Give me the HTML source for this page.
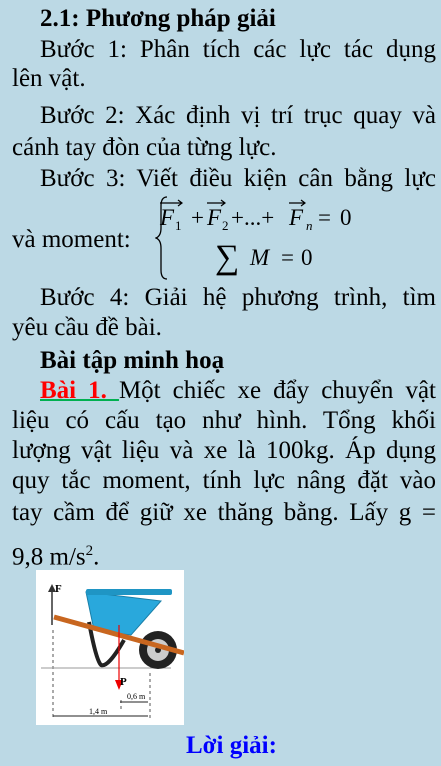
<!DOCTYPE html>
<html><head><meta charset="utf-8"><style>
html,body{margin:0;padding:0}
body{width:441px;height:766px;background:#bcd9e5;position:relative;overflow:hidden;font-family:"Liberation Serif",serif;font-size:25px;color:#000}
.l{position:absolute;left:12px;width:424px;line-height:30px;white-space:nowrap;text-align:justify;text-align-last:justify}
.i{left:40px;width:396px}
.n{text-align-last:left}
b{font-weight:bold}
</style></head><body>
<div class="l i n" style="top:4px"><b>2.1: Phương pháp giải</b></div>
<div class="l i" style="top:35px">Bước 1: Phân tích các lực tác dụng</div>
<div class="l n" style="top:64px">lên vật.</div>
<div class="l i" style="top:101px">Bước 2: Xác định vị trí trục quay và</div>
<div class="l n" style="top:133px">cánh tay đòn của từng lực.</div>
<div class="l i" style="top:164px">Bước 3: Viết điều kiện cân bằng lực</div>
<div class="l n" style="top:225px">và moment:</div>
<svg style="position:absolute;left:155px;top:194px" width="220" height="90">
<path d="M12 3 Q6 3 6 12 L6 34 Q6 42 1 44 Q6 46 6 54 L6 76 Q6 85 12 85" fill="none" stroke="#000" stroke-width="1.3"/>
<g font-family="Liberation Serif" font-size="23" font-style="italic">
<text x="5" y="31">F</text><text x="52" y="31">F</text><text x="134" y="31">F</text><text x="95" y="71">M</text></g>
<g font-family="Liberation Serif" font-size="13"><text x="20" y="36">1</text><text x="67" y="36">2</text><text x="151" y="36" font-style="italic">n</text></g>
<g stroke="#000" stroke-width="1.2" fill="none"><path d="M5 9 H27 M23 6 L27 9 L23 12"/><path d="M52 9 H70 M66 6 L70 9 L66 12"/><path d="M134 9 H150 M146 6 L150 9 L146 12"/></g>
<g font-family="Liberation Serif" font-size="23"><text x="36" y="31">+</text><text x="76" y="31">+...+</text><text x="163" y="31">=</text><text x="185" y="31">0</text><text x="126" y="71">=</text><text x="146" y="71">0</text><text x="60" y="74" font-size="34">∑</text></g>
</svg>
<div class="l i" style="top:283px">Bước 4: Giải hệ phương trình, tìm</div>
<div class="l n" style="top:313px">yêu cầu đề bài.</div>
<div class="l i n" style="top:346px"><b>Bài tập minh hoạ</b></div>
<div class="l i" style="top:376px"><b style="color:#f00;text-decoration:underline;text-decoration-color:#00b050;text-decoration-thickness:2px">Bài 1. </b>Một chiếc xe đẩy chuyển vật</div>
<div class="l" style="top:406px">liệu có cấu tạo như hình. Tổng khối</div>
<div class="l" style="top:436px">lượng vật liệu và xe là 100kg. Áp dụng</div>
<div class="l" style="top:466px">quy tắc moment, tính lực nâng đặt vào</div>
<div class="l" style="top:498px">tay cầm để giữ xe thăng bằng. Lấy g =</div>
<div class="l n" style="top:536px">9,8 m/s<sup style="font-size:15px">2</sup>.</div>
<svg style="position:absolute;left:36px;top:570px" width="148" height="155">
<rect width="148" height="155" fill="#fff"/>
<path d="M16 18 V55" stroke="#333" stroke-width="1.5"/><path d="M12 22 L16 14 L20 22Z" fill="#333"/>
<text x="19" y="22" font-family="Liberation Serif" font-size="11" font-weight="bold">F</text>
<path d="M17 60 V150 M114 103 V148 M85 130 V142" stroke="#555" stroke-dasharray="3 3"/>
<path d="M5 98 H135" stroke="#999"/>
<path d="M53 52 Q60 90 65 95 Q72 98 88 70" stroke="#222" stroke-width="4" fill="none"/>
<path d="M50 22 L58 60 L95 65 L125 31 Z" fill="#29a8dc" stroke="#1a7fa8"/>
<rect x="50" y="19" width="86" height="6" rx="2" fill="#1f95c4"/>
<circle cx="122" cy="80" r="19" fill="#222"/><circle cx="122" cy="80" r="11" fill="#ccc"/><circle cx="122" cy="80" r="3" fill="#222"/>
<path d="M18 47 L148 83" stroke="#c8661f" stroke-width="5"/>
<path d="M83 55 V115" stroke="#e00" stroke-width="1.2"/><path d="M79 110 L83 120 L87 110Z" fill="#e00"/>
<text x="84" y="115" font-family="Liberation Serif" font-size="11" font-weight="bold">P</text>
<path d="M84 132 H112 M17 146 H112" stroke="#222"/>
<text x="91" y="129" font-family="Liberation Serif" font-size="8">0,6 m</text>
<text x="53" y="144" font-family="Liberation Serif" font-size="8">1,4 m</text>
</svg>
<div style="position:absolute;left:186px;top:731px;line-height:30px;color:#0000ff;font-weight:bold">Lời giải:</div>
</body></html>
